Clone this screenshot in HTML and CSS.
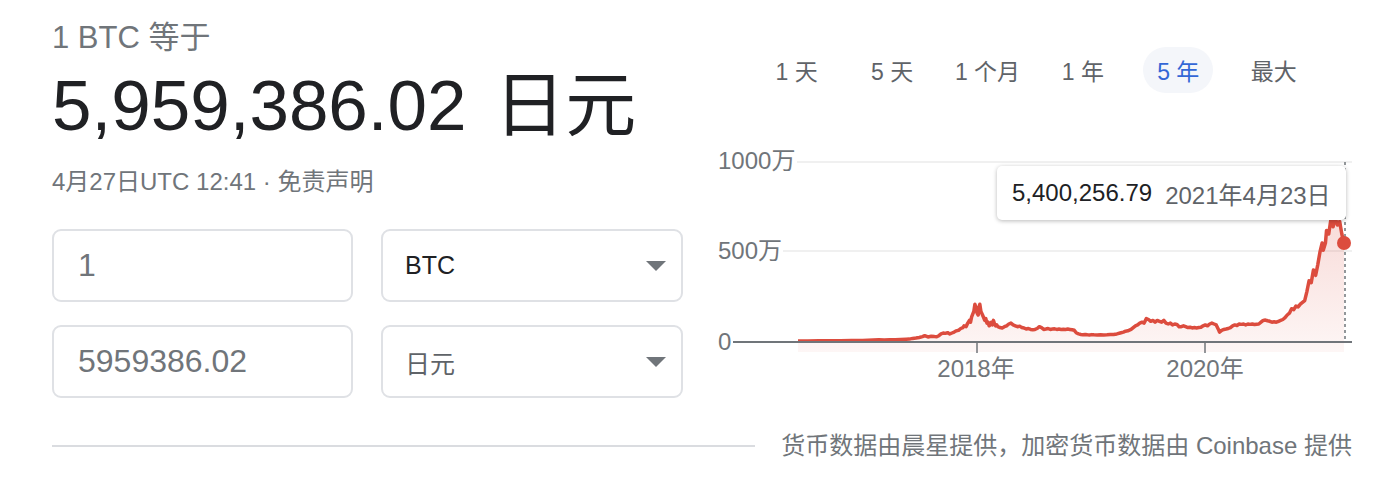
FILE: index.html
```html
<!DOCTYPE html>
<html lang="zh-CN">
<head>
<meta charset="utf-8">
<title>BTC 日元</title>
<link rel="stylesheet" href="styles.css">
</head>
<body>
<div class="page">
  <div class="top">
    <div class="left">
      <div class="pre">1 BTC 等于</div>
      <div class="value"><span class="num">5,959,386.02</span> <span class="unit">日元</span></div>
      <div class="meta">4月27日UTC 12:41 · 免责声明</div>
      <div class="conv">
        <div class="field">1</div>
        <div class="select"><span>BTC</span><svg class="caret" width="20" height="10" viewBox="0 0 20 10"><path d="M0 0H20L10 10Z"/></svg></div>
        <div class="field">5959386.02</div>
        <div class="select muted"><span>日元</span><svg class="caret" width="20" height="10" viewBox="0 0 20 10"><path d="M0 0H20L10 10Z"/></svg></div>
      </div>
    </div>
    <div class="right">
      <div class="ranges">
        <div class="range"><span>1 天</span></div>
        <div class="range"><span>5 天</span></div>
        <div class="range"><span>1 个月</span></div>
        <div class="range"><span>1 年</span></div>
        <div class="range"><span class="on">5 年</span></div>
        <div class="range"><span>最大</span></div>
      </div>
      <div class="chart">
        <svg class="plot" width="668" height="250" viewBox="684 140 668 250">
          <defs>
            <linearGradient id="area" x1="0" y1="0" x2="0" y2="1">
              <stop offset="0" stop-color="#dc4c3e" stop-opacity="0.05"/>
              <stop offset="1" stop-color="#dc4c3e" stop-opacity="0.2"/>
            </linearGradient>
          </defs>
          <line class="grid" x1="797" y1="162" x2="1352" y2="162"/>
          <line class="grid" x1="783" y1="251" x2="1352" y2="251"/>
          <text class="ylab" x="718" y="169">1000万</text>
          <text class="ylab" x="718" y="259">500万</text>
          <text class="ylab" x="718" y="350">0</text>
          <g transform="translate(764.15 342) scale(109.2 -18)">
            <polygon fill="url(#area)" points="0.31,0.05 0.4,0.06 0.5,0.07 0.6,0.07 0.7,0.07 0.8,0.08 0.9,0.09 1.0,0.11 1.05,0.12 1.1,0.11 1.15,0.13 1.2,0.12 1.25,0.14 1.3,0.15 1.33,0.16 1.36,0.2 1.39,0.22 1.42,0.25 1.45,0.3 1.47,0.35 1.5,0.28 1.53,0.32 1.56,0.3 1.58,0.29 1.6,0.35 1.62,0.45 1.64,0.5 1.66,0.48 1.68,0.52 1.7,0.45 1.72,0.5 1.74,0.55 1.76,0.62 1.78,0.65 1.8,0.75 1.82,0.8 1.83,0.9 1.85,0.85 1.86,1.0 1.88,1.2 1.89,1.1 1.9,1.4 1.92,1.7 1.93,2.1 1.94,1.9 1.95,1.6 1.96,1.5 1.97,2.0 1.975,2.1 1.985,1.7 2.0,1.5 2.01,1.35 2.02,1.2 2.03,1.3 2.04,1.05 2.05,1.1 2.06,0.9 2.07,0.95 2.08,1.1 2.09,0.95 2.1,1.2 2.11,1.0 2.12,0.9 2.13,0.95 2.14,0.85 2.16,0.8 2.18,0.78 2.2,0.85 2.22,0.9 2.24,1.0 2.26,1.05 2.28,0.95 2.3,0.9 2.32,0.85 2.34,0.88 2.36,0.8 2.38,0.78 2.4,0.72 2.42,0.75 2.44,0.7 2.46,0.68 2.48,0.7 2.5,0.75 2.52,0.85 2.54,0.8 2.56,0.7 2.58,0.72 2.6,0.75 2.62,0.7 2.64,0.72 2.66,0.73 2.68,0.7 2.7,0.72 2.72,0.7 2.74,0.71 2.76,0.7 2.78,0.72 2.8,0.7 2.82,0.68 2.84,0.65 2.86,0.5 2.88,0.45 2.9,0.42 2.92,0.4 2.94,0.42 2.96,0.4 2.98,0.39 3.0,0.41 3.02,0.4 3.05,0.39 3.08,0.4 3.11,0.39 3.14,0.4 3.17,0.42 3.2,0.42 3.23,0.45 3.26,0.5 3.29,0.55 3.31,0.6 3.33,0.62 3.36,0.7 3.38,0.8 3.4,0.9 3.42,0.95 3.44,1.05 3.46,1.1 3.48,1.05 3.5,1.3 3.52,1.25 3.54,1.15 3.56,1.2 3.58,1.1 3.6,1.2 3.62,1.15 3.64,1.1 3.66,1.2 3.68,1.05 3.7,1.0 3.72,1.05 3.74,0.95 3.76,1.0 3.78,0.98 3.8,0.85 3.82,0.85 3.84,0.9 3.86,0.85 3.88,0.8 3.9,0.82 3.92,0.78 3.94,0.8 3.96,0.78 3.98,0.8 4.0,0.82 4.02,0.9 4.04,0.95 4.06,0.9 4.08,1.0 4.1,1.05 4.12,1.0 4.14,0.95 4.16,0.7 4.17,0.55 4.19,0.65 4.21,0.7 4.23,0.72 4.25,0.75 4.27,0.8 4.29,0.9 4.31,0.95 4.33,0.92 4.35,1.0 4.37,0.98 4.39,1.0 4.41,0.95 4.43,1.0 4.45,0.98 4.47,1.0 4.49,0.97 4.51,0.99 4.53,1.0 4.55,1.1 4.57,1.2 4.59,1.22 4.61,1.18 4.63,1.15 4.65,1.1 4.67,1.12 4.69,1.1 4.71,1.15 4.73,1.2 4.75,1.25 4.77,1.35 4.79,1.5 4.81,1.6 4.83,1.85 4.85,1.8 4.87,2.0 4.89,1.95 4.91,2.1 4.93,2.2 4.95,2.3 4.97,2.8 4.99,3.4 5.01,3.3 5.03,4.0 5.05,3.7 5.07,4.3 5.09,5.0 5.11,5.5 5.12,5.1 5.14,5.5 5.15,6.2 5.17,6.0 5.19,6.8 5.21,6.4 5.23,6.9 5.25,6.5 5.27,6.7 5.29,6.0 5.31,5.45 5.31,-0.56 0.31,-0.56"/>
            <polyline class="line" points="0.31,0.05 0.4,0.06 0.5,0.07 0.6,0.07 0.7,0.07 0.8,0.08 0.9,0.09 1.0,0.11 1.05,0.12 1.1,0.11 1.15,0.13 1.2,0.12 1.25,0.14 1.3,0.15 1.33,0.16 1.36,0.2 1.39,0.22 1.42,0.25 1.45,0.3 1.47,0.35 1.5,0.28 1.53,0.32 1.56,0.3 1.58,0.29 1.6,0.35 1.62,0.45 1.64,0.5 1.66,0.48 1.68,0.52 1.7,0.45 1.72,0.5 1.74,0.55 1.76,0.62 1.78,0.65 1.8,0.75 1.82,0.8 1.83,0.9 1.85,0.85 1.86,1.0 1.88,1.2 1.89,1.1 1.9,1.4 1.92,1.7 1.93,2.1 1.94,1.9 1.95,1.6 1.96,1.5 1.97,2.0 1.975,2.1 1.985,1.7 2.0,1.5 2.01,1.35 2.02,1.2 2.03,1.3 2.04,1.05 2.05,1.1 2.06,0.9 2.07,0.95 2.08,1.1 2.09,0.95 2.1,1.2 2.11,1.0 2.12,0.9 2.13,0.95 2.14,0.85 2.16,0.8 2.18,0.78 2.2,0.85 2.22,0.9 2.24,1.0 2.26,1.05 2.28,0.95 2.3,0.9 2.32,0.85 2.34,0.88 2.36,0.8 2.38,0.78 2.4,0.72 2.42,0.75 2.44,0.7 2.46,0.68 2.48,0.7 2.5,0.75 2.52,0.85 2.54,0.8 2.56,0.7 2.58,0.72 2.6,0.75 2.62,0.7 2.64,0.72 2.66,0.73 2.68,0.7 2.7,0.72 2.72,0.7 2.74,0.71 2.76,0.7 2.78,0.72 2.8,0.7 2.82,0.68 2.84,0.65 2.86,0.5 2.88,0.45 2.9,0.42 2.92,0.4 2.94,0.42 2.96,0.4 2.98,0.39 3.0,0.41 3.02,0.4 3.05,0.39 3.08,0.4 3.11,0.39 3.14,0.4 3.17,0.42 3.2,0.42 3.23,0.45 3.26,0.5 3.29,0.55 3.31,0.6 3.33,0.62 3.36,0.7 3.38,0.8 3.4,0.9 3.42,0.95 3.44,1.05 3.46,1.1 3.48,1.05 3.5,1.3 3.52,1.25 3.54,1.15 3.56,1.2 3.58,1.1 3.6,1.2 3.62,1.15 3.64,1.1 3.66,1.2 3.68,1.05 3.7,1.0 3.72,1.05 3.74,0.95 3.76,1.0 3.78,0.98 3.8,0.85 3.82,0.85 3.84,0.9 3.86,0.85 3.88,0.8 3.9,0.82 3.92,0.78 3.94,0.8 3.96,0.78 3.98,0.8 4.0,0.82 4.02,0.9 4.04,0.95 4.06,0.9 4.08,1.0 4.1,1.05 4.12,1.0 4.14,0.95 4.16,0.7 4.17,0.55 4.19,0.65 4.21,0.7 4.23,0.72 4.25,0.75 4.27,0.8 4.29,0.9 4.31,0.95 4.33,0.92 4.35,1.0 4.37,0.98 4.39,1.0 4.41,0.95 4.43,1.0 4.45,0.98 4.47,1.0 4.49,0.97 4.51,0.99 4.53,1.0 4.55,1.1 4.57,1.2 4.59,1.22 4.61,1.18 4.63,1.15 4.65,1.1 4.67,1.12 4.69,1.1 4.71,1.15 4.73,1.2 4.75,1.25 4.77,1.35 4.79,1.5 4.81,1.6 4.83,1.85 4.85,1.8 4.87,2.0 4.89,1.95 4.91,2.1 4.93,2.2 4.95,2.3 4.97,2.8 4.99,3.4 5.01,3.3 5.03,4.0 5.05,3.7 5.07,4.3 5.09,5.0 5.11,5.5 5.12,5.1 5.14,5.5 5.15,6.2 5.17,6.0 5.19,6.8 5.21,6.4 5.23,6.9 5.25,6.5 5.27,6.7 5.29,6.0 5.31,5.45"/>
          </g>
          <line class="axis" x1="733" y1="342" x2="1352" y2="342"/>
          <line class="tick" x1="977" y1="342" x2="977" y2="353"/>
          <line class="tick" x1="1205" y1="342" x2="1205" y2="353"/>
          <line class="cursor" x1="1345" y1="162" x2="1345" y2="342"/>
          <circle class="dot" cx="1344" cy="243" r="7"/>
          <text class="xlab" x="976" y="377">2018年</text>
          <text class="xlab" x="1205" y="377">2020年</text>
        </svg>
        <div class="tip"><span class="tip-val">5,400,256.79</span><span class="tip-date">2021年4月23日</span></div>
      </div>
    </div>
  </div>
  <div class="footer">
    <div class="rule"></div>
    <div class="src">货币数据由晨星提供，加密货币数据由 Coinbase 提供</div>
  </div>
</div>
</body>
</html>
```

FILE: styles.css
```css
* { box-sizing: border-box; }
html, body { margin: 0; padding: 0; background: #fff; }
body {
  font-family: "Liberation Sans", Arial, "Noto Sans CJK SC", sans-serif;
  color: #202124;
}
.page {
  width: 1388px;
  padding: 0 36px 0 52px;
}
.top {
  display: flex;
}
.left {
  width: 632px;
  flex: none;
}
.pre {
  margin-top: 20px;
  font-size: 31px;
  line-height: 36px;
  color: #70757a;
}
.value {
  margin-top: 10px;
  font-size: 71px;
  line-height: 80px;
  color: #202124;
  white-space: nowrap;
}
.value .unit { margin-left: 8px; }
.meta {
  margin-top: 21px;
  font-size: 24px;
  line-height: 30px;
  color: #70757a;
}
.conv {
  margin-top: 32px;
  display: grid;
  grid-template-columns: 301px 302px;
  grid-auto-rows: 73px;
  column-gap: 28px;
  row-gap: 23px;
}
.field, .select {
  border: 2px solid #dfe1e5;
  border-radius: 9px;
  display: flex;
  align-items: center;
}
.field {
  padding-left: 24px;
  font-size: 32px;
  color: #70757a;
}
.select {
  padding: 0 15px 0 22px;
  justify-content: space-between;
  font-size: 25px;
  color: #202124;
}
.select.muted { color: #5f6368; }
.caret { fill: #70757a; display: block; }
.right {
  flex: 1;
  min-width: 0;
}
.ranges {
  margin-top: 47px;
  margin-left: 65px;
  display: grid;
  grid-template-columns: repeat(6, 95.4px);
  height: 46px;
}
.range {
  display: flex;
  justify-content: center;
  align-items: center;
  font-size: 23px;
  color: #5f6368;
}
.range span {
  display: flex;
  align-items: center;
  height: 46px;
  padding: 0 14px;
  border-radius: 23px;
  white-space: nowrap;
}
.range span.on {
  background: #f4f6fa;
  color: #3367d6;
}
.chart {
  position: relative;
  margin-top: 47px;
  height: 250px;
}
.plot { display: block; }
.grid { stroke: #f0f0f0; stroke-width: 2; }
.axis { stroke: #70757a; stroke-width: 2; }
.tick { stroke: #70757a; stroke-width: 1.5; }
.cursor { stroke: #70757a; stroke-width: 1.5; stroke-dasharray: 3 3; }
.line {
  fill: none;
  stroke: #dc4c3e;
  stroke-width: 3.5;
  stroke-linejoin: round;
  vector-effect: non-scaling-stroke;
}
.dot { fill: #dc4c3e; }
.ylab, .xlab {
  font-family: "Liberation Sans", Arial, "Noto Sans CJK SC", sans-serif;
  font-size: 24px;
  fill: #70757a;
}
.xlab { text-anchor: middle; }
.tip {
  position: absolute;
  left: 313px;
  top: 26px;
  width: 349px;
  height: 54px;
  background: #fff;
  border-radius: 5px;
  box-shadow: 0 1px 4px rgba(0, 0, 0, 0.28);
  display: flex;
  align-items: center;
  padding-left: 15px;
  font-size: 24px;
  white-space: nowrap;
}
.tip-val { color: #202124; }
.tip-date { color: #5f6368; margin-left: 13px; }
.footer {
  margin-top: 32px;
  display: flex;
  align-items: center;
  gap: 26px;
}
.rule {
  flex: 1;
  height: 2px;
  background: #dadce0;
}
.src {
  font-size: 24px;
  line-height: 32px;
  color: #70757a;
  white-space: nowrap;
}
```
